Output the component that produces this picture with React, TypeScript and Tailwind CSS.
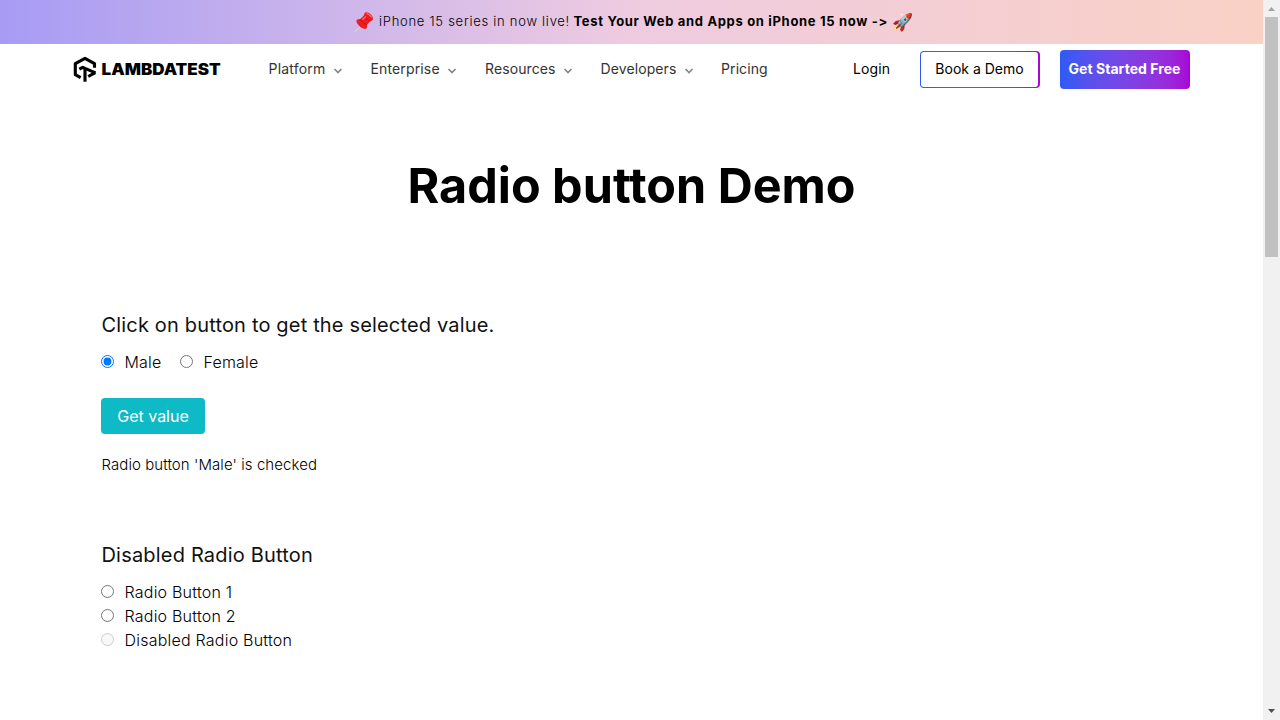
import React, { useState } from 'react';

function Pushpin() {
  return (
    <svg className="h-[22px] w-5 shrink-0" viewBox="0 0 20 22">
      <path d="M1.200 20.600 7.500 14" stroke="#d3cede" strokeWidth="1.500" strokeLinecap="round" />
      <path d="M12.300 1.200c3 0 6.500 3 6.700 6.500.1 1.600-1.600 2.300-2.800 2.500l-3.200 3.500c.5 2-.2 3.800-1.500 4.300-3.600-.2-8.300-4-9.200-8 .2-1.600 2.300-2.300 4-2l3.900-3.800c-.2-1.600.7-2.900 2.100-3Z" fill="#ef1c20" />
      <path d="M10.200 4.600c1.200 2.400 3.300 4.500 6 5.600M6.300 8c1.200 2.600 3.800 4.900 6.700 5.700" stroke="#c80f18" strokeWidth="1" fill="none" />
      <path d="m8.900 8.300 2.600-2.500M13 2.600c1.700.3 3.300 1.700 4.200 3.300" stroke="#ff7068" strokeWidth="1.300" strokeLinecap="round" fill="none" />
    </svg>
  );
}

function Chevron() {
  return (
    <svg className="ml-[7.5px] mt-[3px] h-2 w-[10px] shrink-0" viewBox="0 0 10 8" fill="none">
      <path d="M1.500 2 5 5.500 8.500 2" stroke="#858585" strokeWidth="1.700" />
    </svg>
  );
}

function Logo() {
  return (
    <svg className="h-[26px] w-[148px]" viewBox="0 0 148 26" role="img" aria-label="LambdaTest">
      <g fill="none" stroke="#000" strokeWidth="3.100" strokeLinejoin="round">
        <path d="M7.600 21.600 2.300 18.700V7.700L12 2.300l9.500 5.400v4" />
        <path d="M6.300 13.200 9.700 11.300 22.500 16.800" />
        <path d="M12 12.300v13.400" />
        <path d="M15.200 20.500 22.300 16.600" />
      </g>
      <text x="28.600" y="18.800" textLength="119" lengthAdjust="spacingAndGlyphs" className="fill-black font-['Inter',sans-serif] text-[16px] font-black">LAMBDATEST</text>
    </svg>
  );
}

const menu = [
  { label: 'Platform', box: 'w-[102px] tracking-[0.2px]', more: true },
  { label: 'Enterprise', box: 'w-[114.5px] tracking-[0.14px]', more: true },
  { label: 'Resources', box: 'w-[115.5px] tracking-[0.1px]', more: true },
  { label: 'Developers', box: 'w-[120.5px] tracking-[0.1px]', more: true },
  { label: 'Pricing', box: 'w-[132px] tracking-[0.1px]', more: false },
];

function Radio({ checked, disabled, onSelect, name }: { checked?: boolean; disabled?: boolean; onSelect?: () => void; name: string }) {
  return (
    <input type="radio" name={name} checked={checked} disabled={disabled} onChange={onSelect} className="mr-[10.5px] mb-[2px] size-[13px] shrink-0" />
  );
}

export default function App() {
  const [gender, setGender] = useState('Male');
  const [shown, setShown] = useState('Male');
  const [option, setOption] = useState('');
  return (
    <div className="flex h-[720px] w-full overflow-hidden bg-white font-['Inter',sans-serif] text-black">
      <div className="flex min-w-0 flex-1 flex-col">
        <div className="flex h-11 shrink-0 bg-linear-to-r from-[#a79bf4] via-[#efcbe0] to-[#f9d1c5] pl-[354px] text-[13px] leading-[43px] whitespace-nowrap">
          <div className="pt-[11px]"><Pushpin /></div>
          <span className="ml-[5px] w-[194.5px] shrink-0 font-light tracking-[0.73px]">iPhone 15 series in now live!</span>
          <span className="w-[318.5px] shrink-0 font-bold tracking-[0.67px]">Test Your Web and Apps on iPhone 15 now -&gt;</span>
          <span className="text-[17px] leading-[44px]">🚀</span>
        </div>

        <header className="flex h-[50px] shrink-0 items-center pl-[73px] text-sm whitespace-nowrap">
          <Logo />
          <nav className="ml-[47.5px] flex text-[#333]">
            {menu.map((m) => (
              <a key={m.label} className={`flex shrink-0 items-center leading-5 ${m.box}`}>
                {m.label}
                {m.more && <Chevron />}
              </a>
            ))}
          </nav>
          <a className="w-[66.5px] shrink-0 tracking-[0.1px]">Login</a>
          <a className="flex h-[37px] w-[120px] shrink-0 rounded bg-linear-to-r from-[#2c5af5] to-[#a803d6] p-px pr-[2px]">
            <span className="flex flex-1 items-center justify-center rounded-[3px] bg-white pl-px">Book a Demo</span>
          </a>
          <a className="ml-5 flex h-[39px] w-[130px] shrink-0 items-center justify-center rounded bg-linear-to-r from-[#2c5af5] to-[#a803d6] font-bold tracking-[0.05px] text-white">Get Started Free</a>
        </header>

        <main className="flex flex-col pl-[101px]">
          <h1 className="mt-[62px] -ml-[101px] text-center text-[48.5px] leading-[60px] font-bold">Radio button Demo</h1>
          <section className="mt-[94px]">
            <h4 className="pl-[0.5px] text-[20px] leading-[30px] tracking-[0.17px] text-[#111]">Click on button to get the selected value.</h4>
            <div className="mt-[10px] flex h-6 items-center font-light tracking-[0.2px]">
              <label className="flex w-[79px] items-center"><Radio name="gender" checked={gender === 'Male'} onSelect={() => setGender('Male')} />Male</label>
              <label className="flex items-center"><Radio name="gender" checked={gender === 'Female'} onSelect={() => setGender('Female')} />Female</label>
            </div>
            <button onClick={() => setShown(gender)} className="mt-6 block h-9 w-[104px] rounded bg-[#0ebac5] text-white">Get value</button>
            <p className="mt-[19px] pl-[0.5px] text-[15px] leading-6 font-light tracking-[0.07px]">Radio button '{shown}' is checked</p>
          </section>
          <section className="mt-[63px]">
            <h4 className="pl-[0.5px] text-[20px] leading-[30px] tracking-[0.19px] text-[#111]">Disabled Radio Button</h4>
            <div className="mt-[10px] flex flex-col leading-6 font-light tracking-[0.22px]">
              {['Radio Button 1', 'Radio Button 2'].map((o) => (
                <label key={o} className="flex items-center"><Radio name="option" checked={option === o} onSelect={() => setOption(o)} />{o}</label>
              ))}
              <label className="flex items-center"><Radio name="option" disabled />Disabled Radio Button</label>
            </div>
          </section>
        </main>
      </div>

      <div className="flex w-[17px] shrink-0 flex-col items-center bg-[#f1f1f1]">
        <svg className="h-[17px] w-[17px] shrink-0" viewBox="0 0 17 17"><path d="M5 11h7L8.500 7Z" fill="#a3a3a3" /></svg>
        <div className="h-60 w-[13px] bg-[#c1c1c1]" />
        <svg className="mt-auto h-[17px] w-[17px] shrink-0" viewBox="0 0 17 17"><path d="M5 6h7l-3.500 4Z" fill="#505050" /></svg>
      </div>
    </div>
  );
}
